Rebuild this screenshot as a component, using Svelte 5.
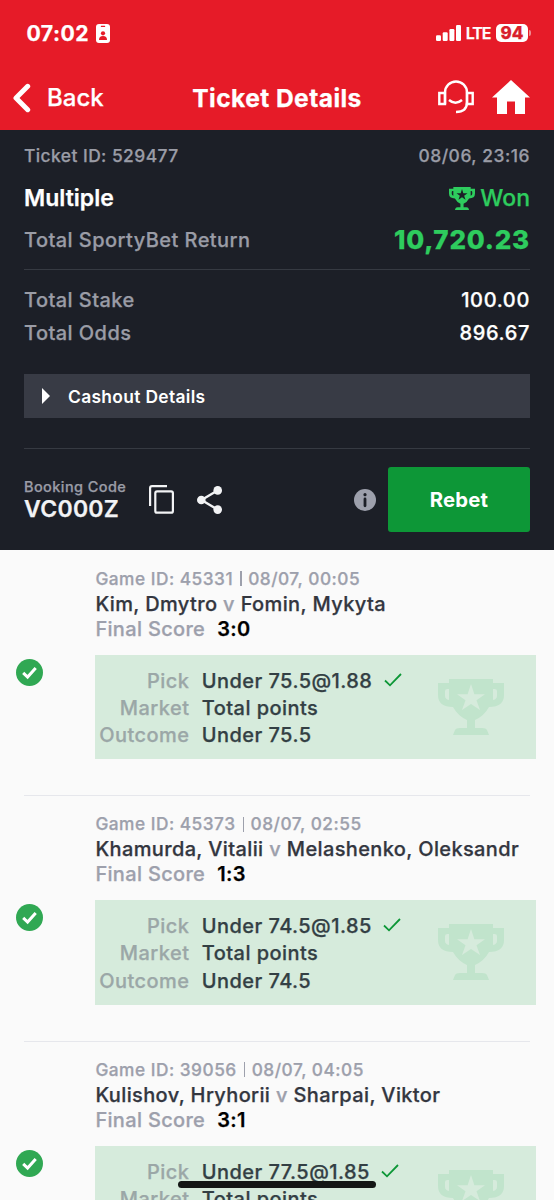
<script>
  const games = [
    {
      id: "45331",
      time: "08/07, 00:05",
      home: "Kim, Dmytro",
      away: "Fomin, Mykyta",
      score: "3:0",
      pick: "Under 75.5@1.88",
      market: "Total points",
      outcome: "Under 75.5",
    },
    {
      id: "45373",
      time: "08/07, 02:55",
      home: "Khamurda, Vitalii",
      away: "Melashenko, Oleksandr",
      score: "1:3",
      pick: "Under 74.5@1.85",
      market: "Total points",
      outcome: "Under 74.5",
    },
    {
      id: "39056",
      time: "08/07, 04:05",
      home: "Kulishov, Hryhorii",
      away: "Sharpai, Viktor",
      score: "3:1",
      pick: "Under 77.5@1.85",
      market: "Total points",
      outcome: "",
    },
  ];
</script>

{#snippet trophy()}
  <path
    fill-rule="evenodd"
    d="M11 0H55V4H66V16Q66 28 51 28Q46 37 37 41V49H44Q48 49 49 51L51 56H15L17 51Q18 49 22 49H29V41Q20 37 15 28Q0 28 0 16V4H11ZM9.5 10Q7 10 7 12V17Q7 20 11 21V10ZM55 10V21Q59 20 59 17V12Q59 10 56.5 10ZM33 5L29.6 15.2H19L27.5 21.3L24 31L33 25L42 31L38.5 21.3L47 15.2H36.4Z"
  />
{/snippet}

<div class="screen">
  <header>
    <div class="status-bar">
      <div class="clock">
        <span>07:02</span>
        <svg class="badge-icon" viewBox="0 0 14 19">
          <rect width="14" height="19" rx="3" fill="#fff" />
          <rect x="4.8" y="1.8" width="4.4" height="1.3" rx="0.6" fill="#e61b28" />
          <circle cx="7" cy="9.3" r="2.1" fill="#e61b28" />
          <path d="M3 16Q3 12 7 12Q11 12 11 16Z" fill="#e61b28" />
        </svg>
      </div>
      <div class="signal">
        <svg class="bars" viewBox="0 0 25 16" fill="#fff">
          <rect y="10.3" width="5" height="5.7" rx="1.2" />
          <rect x="6.7" y="7.3" width="5" height="8.7" rx="1.2" />
          <rect x="13.4" y="4" width="5" height="12" rx="1.2" />
          <rect x="20" y="0" width="5" height="16" rx="1.2" />
        </svg>
        <span class="network">LTE</span>
        <span class="battery">94</span>
        <span class="battery-cap"></span>
      </div>
    </div>
    <nav>
      <button class="back">
        <svg viewBox="0 0 20 30">
          <path d="M15.7 3.3L4 15L15.7 26.7" fill="none" stroke="#fff" stroke-width="5" stroke-linecap="round" stroke-linejoin="round" />
        </svg>
        <span>Back</span>
      </button>
      <h1>Ticket Details</h1>
      <div class="nav-icons">
        <svg class="headset" viewBox="0 0 36 34" fill="none" stroke="#fff" stroke-width="2.4">
          <path d="M7 24V12.5A11 11 0 0 1 29 12.5V22Q29 32 18 32" />
          <path d="M7 13H1.3V24H7ZM29 13H34.7V24H29Z" />
          <path d="M11 20Q17.5 25.5 24 20" />
        </svg>
        <svg class="house" viewBox="0 0 38 34" fill="#fff">
          <path d="M19 0L38 17.5H33V34H23V21.5H15V34H5V17.5H0Z" />
        </svg>
      </div>
    </nav>
  </header>

  <section class="summary">
    <div class="row ticket">
      <span>Ticket ID: 529477</span>
      <span class="date">08/06, 23:16</span>
    </div>
    <div class="row type">
      <span>Multiple</span>
      <span class="won">
        <svg viewBox="0 0 66 56" fill="#2ecc5e" preserveAspectRatio="none">{@render trophy()}</svg>
        <span>Won</span>
      </span>
    </div>
    <div class="row return">
      <span>Total SportyBet Return</span>
      <strong>10,720.23</strong>
    </div>
    <div class="row stake">
      <span>Total Stake</span>
      <span class="value">100.00</span>
    </div>
    <div class="row odds">
      <span>Total Odds</span>
      <span class="value">896.67</span>
    </div>
    <button class="cashout">
      <svg viewBox="0 0 8 16"><path d="M0 0L8 8L0 16Z" fill="#fff" /></svg>
      <span>Cashout Details</span>
    </button>
    <div class="booking">
      <div class="code">
        <span class="code-label">Booking Code</span>
        <span class="code-value">VC000Z</span>
      </div>
      <svg class="copy" viewBox="0 0 25 29" fill="none" stroke="#f2f3f5" stroke-width="2.2">
        <path d="M1.1 21V3Q1.1 1.2 3 1.2H18" />
        <rect x="6.3" y="6.3" width="17.6" height="21.4" rx="1.8" />
      </svg>
      <svg class="share" viewBox="0 0 26 28" fill="#f2f3f5">
        <path d="M20.5 4.5L4.5 14L20.5 23.5" fill="none" stroke="#f2f3f5" stroke-width="2.4" />
        <circle cx="20.7" cy="4.4" r="4.3" />
        <circle cx="4.3" cy="14" r="4.3" />
        <circle cx="20.7" cy="23.6" r="4.3" />
      </svg>
      <svg class="info" viewBox="0 0 22 22">
        <circle cx="11" cy="11" r="11" fill="#9da0ac" />
        <circle cx="11" cy="5.7" r="1.6" fill="#1c1f27" />
        <path d="M11 10V16.8" stroke="#1c1f27" stroke-width="2.8" stroke-linecap="round" />
      </svg>
      <button class="rebet">Rebet</button>
    </div>
  </section>

  <main>
    {#each games as game}
      <article>
        <svg class="status" viewBox="0 0 27 27">
          <circle cx="13.5" cy="13.5" r="13.5" fill="#30a853" />
          <path d="M7.2 13.8L11.6 18L19.7 9" fill="none" stroke="#fff" stroke-width="3" />
        </svg>
        <div class="game">
          <div class="meta">Game ID: {game.id}<i></i>{game.time}</div>
          <div class="teams">{game.home} <span>v</span> {game.away}</div>
          <div class="score"><span>Final Score</span><b>{game.score}</b></div>
          <div class="pick-box">
            <dl>
              <dt>Pick</dt>
              <dd>
                <span>{game.pick}</span>
                <svg class="tick" viewBox="0 0 18 14">
                  <path d="M1 7.5L6 12.3L17 1" fill="none" stroke="#0d9737" stroke-width="1.8" />
                </svg>
              </dd>
              <dt>Market</dt>
              <dd>{game.market}</dd>
              {#if game.outcome}
                <dt>Outcome</dt>
                <dd>{game.outcome}</dd>
              {/if}
            </dl>
            <svg class="cup" viewBox="0 0 66 56" fill="#c1e4cc">{@render trophy()}</svg>
          </div>
        </div>
      </article>
    {/each}
  </main>

  <div class="home-indicator"></div>
</div>

<style>
  :global(body) {
    background: #fafafa;
  }

  .screen {
    position: relative;
    width: 554px;
    height: 1200px;
    overflow: hidden;
    background: #fafafa;
    font-family: Inter, "Liberation Sans", sans-serif;
    font-weight: 500;
    -webkit-text-stroke-width: 0.25px;
  }

  svg {
    display: block;
    flex: none;
  }

  button {
    font: inherit;
    border: 0;
    padding: 0;
    color: #fff;
    background: none;
    cursor: pointer;
  }

  header {
    height: 130px;
    background: #e61b28;
    color: #fff;
  }

  .status-bar {
    display: flex;
    justify-content: space-between;
    align-items: center;
    height: 66px;
    padding: 0 23px 0 26.5px;
  }

  .clock {
    display: flex;
    align-items: center;
    gap: 6.5px;
    font-size: 21.2px;
    font-weight: 700;
    letter-spacing: 0.5px;
  }

  .badge-icon {
    width: 14px;
    height: 19px;
  }

  .signal {
    display: flex;
    align-items: center;
  }

  .bars {
    width: 25px;
    height: 16px;
  }

  .network {
    margin-left: 4.5px;
    font-size: 16px;
    font-weight: 600;
    letter-spacing: -1px;
  }

  .battery {
    width: 32px;
    height: 18px;
    margin-left: 5.5px;
    border-radius: 5px;
    background: #fff;
    color: #d81f2c;
    font-size: 17px;
    font-weight: 800;
    line-height: 18px;
    text-align: center;
  }

  .battery-cap {
    width: 2px;
    height: 6px;
    margin-left: 1px;
    border-radius: 0 2px 2px 0;
    background: #f08a90;
  }

  nav {
    display: grid;
    grid-template-columns: 1fr auto 1fr;
    align-items: center;
    height: 64px;
    padding: 0 24px;
  }

  .back {
    display: flex;
    align-items: center;
    gap: 15px;
    margin-left: -12px;
    font-size: 24px;
    line-height: 30px;
  }

  .back svg {
    width: 20px;
    height: 30px;
  }

  h1 {
    margin: 0;
    font-size: 24.6px;
    font-weight: 700;
    line-height: 29px;
    letter-spacing: 0.42px;
  }

  .nav-icons {
    display: flex;
    justify-content: flex-end;
    align-items: center;
    gap: 18px;
    margin-bottom: 2px;
  }

  .headset {
    width: 36px;
    height: 34px;
  }

  .house {
    width: 38px;
    height: 34px;
  }

  .summary {
    box-sizing: border-box;
    height: 419.5px;
    padding: 8px 24px 0;
    background: #1c1f27;
    color: #9a9ca6;
  }

  .row {
    display: flex;
    justify-content: space-between;
    align-items: center;
    font-size: 20px;
    letter-spacing: 0.44px;
  }

  .ticket {
    height: 34px;
    font-size: 17.4px;
  }

  .date {
    letter-spacing: 0.55px;
  }

  .type {
    height: 52px;
    color: #fff;
    font-size: 23px;
    font-weight: 600;
    letter-spacing: 0;
  }

  .won {
    display: flex;
    align-items: center;
    gap: 5px;
    color: #2ecc5e;
    font-weight: 500;
  }

  .won svg {
    width: 26px;
    height: 23px;
  }

  .return {
    height: 31px;
    padding-bottom: 14px;
    border-bottom: 1px solid #363a42;
  }

  .return strong {
    color: #2ecc5e;
    font-size: 26px;
    font-weight: 800;
    letter-spacing: 0.8px;
  }

  .stake {
    height: 33px;
    margin-top: 13px;
  }

  .odds {
    height: 33px;
  }

  .value {
    color: #fff;
    letter-spacing: 0.65px;
  }

  .cashout {
    display: flex;
    align-items: center;
    gap: 18px;
    width: 100%;
    height: 44px;
    margin: 25px 0 30px;
    padding-left: 18px;
    background: #383b45;
    font-size: 17.4px;
    font-weight: 600;
    letter-spacing: 0.33px;
    -webkit-text-stroke-width: 0;
  }

  .cashout svg {
    width: 8px;
    height: 16px;
  }

  .booking {
    display: flex;
    align-items: center;
    padding-top: 18px;
    border-top: 1px solid #363a42;
  }

  .code {
    display: flex;
    flex-direction: column;
    width: 125px;
    padding-bottom: 1px;
    white-space: nowrap;
  }

  .code-label {
    font-size: 14.5px;
    line-height: 20px;
    letter-spacing: 0.42px;
  }

  .code-value {
    color: #f2f3f5;
    font-size: 23px;
    font-weight: 600;
    line-height: 25px;
    letter-spacing: 0.3px;
  }

  .copy {
    width: 25px;
    height: 29px;
  }

  .share {
    width: 26px;
    height: 28px;
    margin-left: 22.5px;
  }

  .info {
    width: 22px;
    height: 22px;
    margin-left: auto;
  }

  .rebet {
    width: 142px;
    height: 65px;
    margin-left: 12px;
    border-radius: 3px;
    background: #0d9737;
    font-size: 20.3px;
    font-weight: 700;
    letter-spacing: 0.2px;
    -webkit-text-stroke-width: 0;
  }

  article {
    display: flex;
    align-items: flex-start;
    box-sizing: border-box;
    height: 245.5px;
    margin: 0 18px 0 24px;
    padding-top: 17px;
    position: relative;
  }

  article + article::before {
    content: "";
    position: absolute;
    top: 0;
    left: 0;
    right: 6px;
    height: 1px;
    background: #e6e7ec;
  }

  .status {
    width: 27px;
    height: 27px;
    margin: 92px 52.4px 0 -8px;
  }

  .game {
    flex: 1;
    min-width: 0;
    white-space: nowrap;
  }

  .meta {
    display: flex;
    align-items: center;
    color: #9da0ac;
    font-size: 17.3px;
    line-height: 24px;
    letter-spacing: 0.5px;
  }

  .meta i {
    width: 1.5px;
    height: 15px;
    margin: 0 6.5px 0 7px;
    background: #9da0ac;
  }

  .teams {
    color: #33363f;
    font-size: 20px;
    line-height: 26px;
    letter-spacing: 0.37px;
  }

  .teams span {
    color: #9da0ac;
  }

  .score {
    color: #9da0ac;
    font-size: 20px;
    line-height: 25px;
    letter-spacing: 0.32px;
  }

  .score b {
    margin-left: 12px;
    color: #000;
    font-weight: 600;
  }

  .pick-box {
    display: flex;
    justify-content: space-between;
    box-sizing: border-box;
    height: 104.5px;
    margin-top: 13px;
    padding: 13px 32px 0 0;
    background: #d6ebdc;
  }

  dl {
    display: grid;
    grid-template-columns: 94px auto;
    column-gap: 12.4px;
    grid-auto-rows: 27.4px;
    margin: 0;
    font-size: 20px;
    line-height: 27.4px;
    letter-spacing: 0.44px;
  }

  dt {
    color: #9ba7a7;
    text-align: right;
  }

  dd {
    display: flex;
    align-items: center;
    gap: 11.5px;
    margin: 0;
    color: #333f44;
  }

  .tick {
    width: 18px;
    height: 14px;
    margin-top: -3px;
  }

  .cup {
    width: 66px;
    height: 56px;
    margin-top: 11px;
  }

  .home-indicator {
    position: absolute;
    left: 178px;
    top: 1181px;
    width: 198px;
    height: 7px;
    border-radius: 4px;
    background: #141715;
  }
</style>
